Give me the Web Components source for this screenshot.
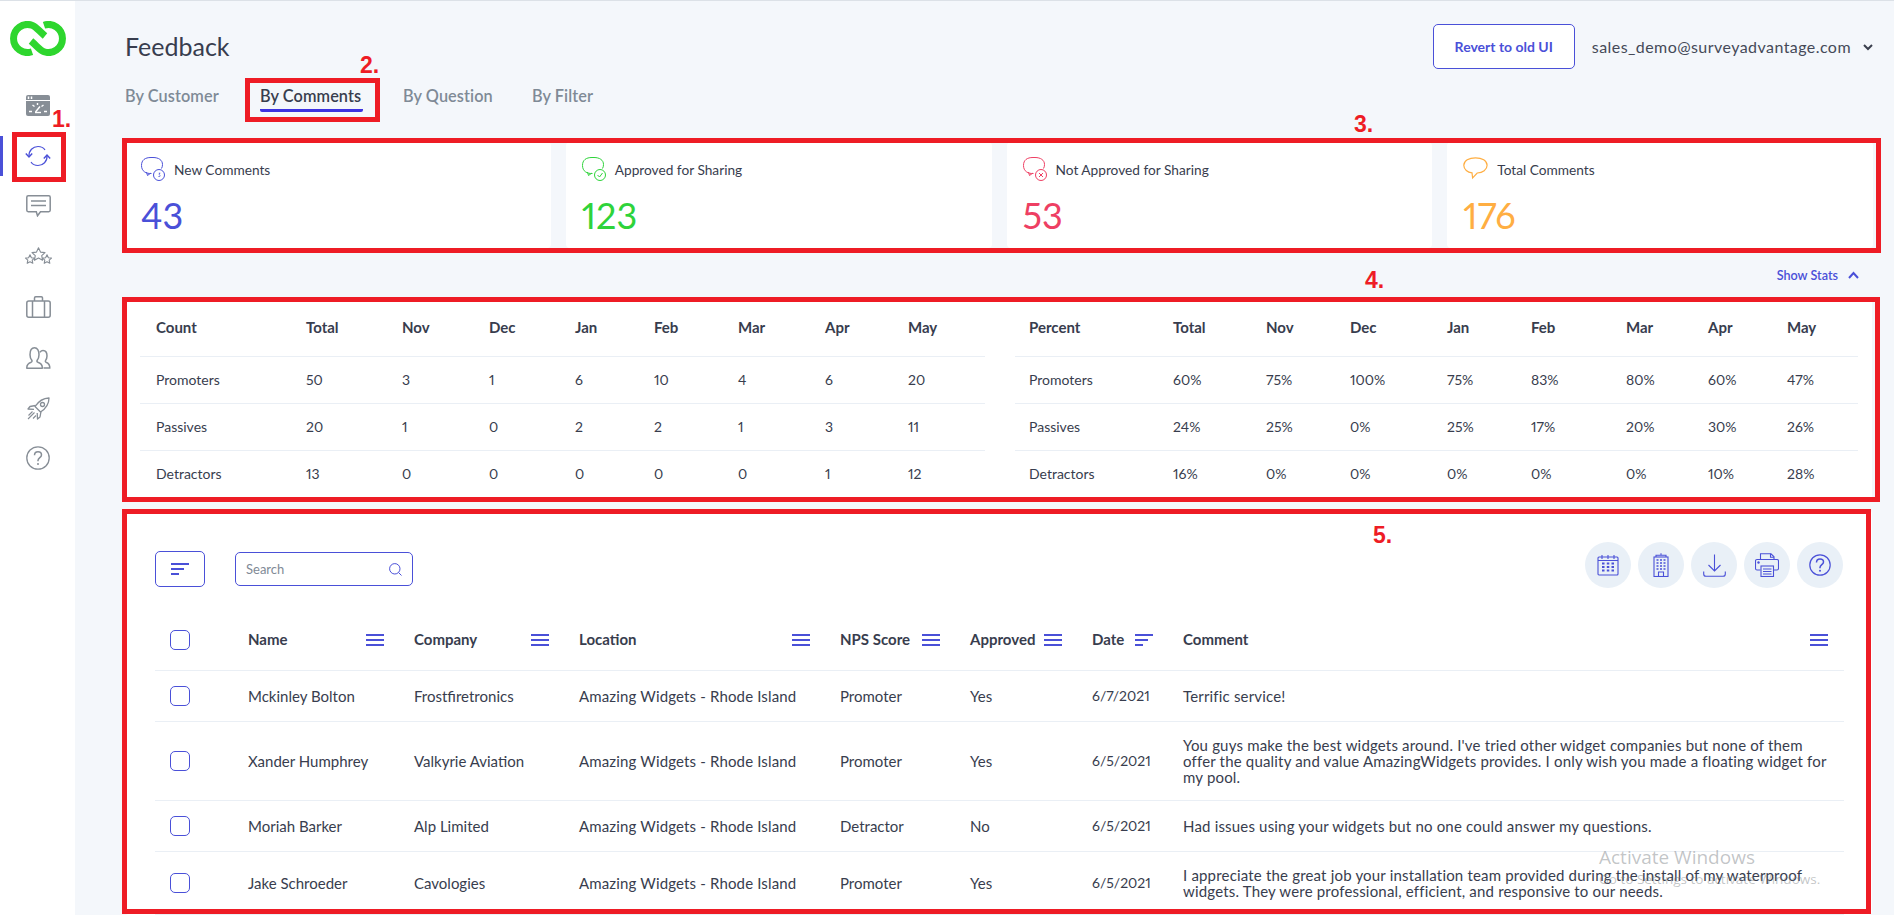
<!DOCTYPE html>
<html>
<head>
<meta charset="utf-8">
<title>Feedback</title>
<style>
    html, body { margin: 0; height: 100%; overflow: hidden; }
    body {
        background: #f4f7fb;
        font-family: Lato, "Noto Sans", sans-serif;
        font-variant-numeric: proportional-nums;
        color: #383d4e;
    }
</style>
</head>
<body>
<app-shell>
    <side-nav slot="nav"></side-nav>
    <page-head></page-head>
    <stat-row>
        <stat-card label="New Comments" value="43" color="#4a50d8" kind="new"></stat-card>
        <stat-card label="Approved for Sharing" value="123" color="#2ed33a" kind="ok"></stat-card>
        <stat-card label="Not Approved for Sharing" value="53" color="#ee3f63" kind="no"></stat-card>
        <stat-card label="Total Comments" value="176" color="#ffae42" kind="total"></stat-card>
    </stat-row>
    <stats-toggle></stats-toggle>
    <stats-panel></stats-panel>
    <feedback-panel></feedback-panel>
</app-shell>

<note-box x="12" y="132" w="54" h="50"></note-box>
<note-box x="245" y="78" w="135" h="44"></note-box>
<note-box x="122" y="138" w="1759" h="115"></note-box>
<note-box x="122" y="297" w="1758" h="205"></note-box>
<note-box x="122" y="509" w="1749" h="405"></note-box>
<note-label x="52" y="108">1.</note-label>
<note-label x="360" y="54">2.</note-label>
<note-label x="1354" y="113">3.</note-label>
<note-label x="1365" y="269">4.</note-label>
<note-label x="1373" y="524">5.</note-label>
<win-mark></win-mark>

<script>
const BLUE = '#4a50d8';

const NAV_ICONS = {
    dash: `<svg width="24" height="21" viewBox="0 0 24 21"><rect width="24" height="21" rx="2" fill="#878e96"/><path d="M0 5.5h24" stroke="#fff" stroke-width="1"/><path d="M2.5 1.5v2.5M5.5 1.5v2.5" stroke="#fff" stroke-width="1.5"/><path d="M3 16.5h3M18 16.5h3M6.5 10l2 1.5M11.5 8v2M17.5 10l-2 1.5M9.5 17l4.5-5.5" stroke="#fff" stroke-width="1.4" fill="none"/><path d="M9 17.5h6" stroke="#fff" stroke-width="1.4"/></svg>`,
    sync: `<svg width="26" height="22" viewBox="0 0 26 22" fill="none" stroke="${BLUE}" stroke-width="1.2"><path d="M4 11.5C3.5 5.5 8 1.5 13 1.5c3 0 5.5 1.2 7 3.5"/><path d="M22 10.5C22.5 16.5 18 20.5 13 20.5c-3 0-5.5-1.2-7-3.5"/><path d="M.8 8.5 4 12l3.2-3.5M18.8 13.5 22 10l3.2 3.5" stroke-width="1.4"/></svg>`,
    chat: `<svg width="25" height="22" viewBox="0 0 25 22" fill="none" stroke="#878e96" stroke-width="1.5"><path d="M2.2.8h20.600a1.400 1.400 0 0 1 1.400 1.400v13.100a1.400 1.400 0 0 1-1.400 1.400h-8.300l-3 4.100-1.200-4.100H2.200A1.400 1.400 0 0 1 .8 15.300V2.200A1.400 1.400 0 0 1 2.200.8z"/><path d="M5 6h15M5 10.500h15"/></svg>`,
    stars: `<svg width="29" height="20" viewBox="0 0 29 20" fill="none" stroke="#878e96" stroke-width="1.1" stroke-linejoin="round"><path d="M14.500.8l2 4.300 4.500.5-3.300 3.100.9 4.600-4.100-2.300-4.100 2.300.9-4.600L8 5.600l4.500-.5z"/><path d="M6 7.800l1.400 2.900 3.100.4-2.300 2.100.6 3.100L6 14.800l-2.800 1.500.6-3.100-2.300-2.100 3.100-.4z"/><path d="M23 7.800l1.400 2.900 3.100.4-2.300 2.100.6 3.100-2.800-1.500-2.800 1.500.6-3.100-2.300-2.100 3.100-.4z"/></svg>`,
    case: `<svg width="25" height="22" viewBox="0 0 25 22" fill="none" stroke="#878e96" stroke-width="1.5"><rect x=".8" y="5" width="23.400" height="16.200" rx="2"/><path d="M8.500 5V2a1.200 1.200 0 0 1 1.200-1.200h5.600A1.200 1.200 0 0 1 16.500 2v3M6.500 5v16M18.500 5v16"/></svg>`,
    people: `<svg width="25" height="22" viewBox="0 0 25 22" fill="none" stroke="#878e96" stroke-width="1.5" stroke-linejoin="round"><path d="M.8 21.200h15.500c.3-3.500-1.500-5-4.500-6-.8-.4-1-1.200-.6-2 1.200-1.500 1.800-3.300 1.800-5.500C13 3.500 11.300.8 8.500.8S4 3.500 4 7.700c0 2.200.6 4 1.800 5.500.4.800.2 1.600-.6 2-3 1-4.600 2.500-4.400 6z"/><path d="M14 5.200c.8-1 1.800-1.600 3-1.600 2.500 0 4 2.300 4 5.500 0 1.800-.5 3.200-1.500 4.500-.3.700-.2 1.300.5 1.600 2.400.9 4 2.200 3.800 5.900h-6.300"/></svg>`,
    rocket: `<svg width="23" height="23" viewBox="0 0 23 23" fill="none" stroke="#878e96" stroke-width="1.3" stroke-linejoin="round"><path d="M22 1c-6 .2-10.500 3.300-14 8.500l5.500 5.500C19 11.500 22 7 22 1z"/><circle cx="15.500" cy="7.500" r="2"/><path d="M8.500 8.500L3 9.500 1 12l6 .3M14 14.500l-1 5.500-2.500 2-.3-6"/><path d="M1.500 18.500l4-4M1 22l6.500-6.500M6 21.500l3-3" stroke-width="1.1"/></svg>`,
    help: `<svg width="24" height="24" viewBox="0 0 24 24" fill="none" stroke="#878e96" stroke-width="1.3"><circle cx="12" cy="12" r="11.200"/><path d="M8.500 9.300C8.500 7 10 5.800 12 5.800s3.500 1.300 3.500 3.200c0 2.600-3.500 2.800-3.500 5.500v.8" stroke-width="1.5"/><circle cx="12" cy="18" r="1" fill="#878e96" stroke="none"/></svg>`
};

const TOOL_ICONS = {
    calendar: `<svg width="22" height="22" viewBox="0 0 22 22" fill="none" stroke="${BLUE}" stroke-width="1.1"><rect x="1" y="3" width="20" height="18" rx="1"/><path d="M1 6.500h20M5 1v4M11 1v4M17 1v4"/><path d="M5 9.500h2.500M9.800 9.500h2.500M14.500 9.500H17M5 13h2.500M9.800 13h2.500M14.500 13H17M5 16.500h2.500M9.800 16.500h2.500M14.500 16.500H17" stroke-width="2"/></svg>`,
    building: `<svg width="16" height="24" viewBox="0 0 16 24" fill="none" stroke="${BLUE}" stroke-width="1.1"><rect x="1" y="4" width="14" height="19.500"/><path d="M3 4V2.200h10V4M8 2.200V.3"/><path d="M3.500 7h2M7 7h2M10.500 7h2M3.500 10h2M7 10h2M10.500 10h2M3.500 13h2M7 13h2M10.500 13h2M3.500 16h2M7 16h2M10.500 16h2" stroke-width="1.7"/><path d="M5.500 23.500V19h5v4.500"/></svg>`,
    download: `<svg width="23" height="23" viewBox="0 0 23 23" fill="none" stroke="${BLUE}" stroke-width="1.1"><path d="M11.500.5v16M5.500 11l6 6 6-6"/><path d="M.7 17.500v2.500a2.300 2.300 0 0 0 2.300 2.300h17a2.300 2.300 0 0 0 2.300-2.300v-2.500"/></svg>`,
    print: `<svg width="24" height="24" viewBox="0 0 24 24" fill="none" stroke="${BLUE}" stroke-width="1.1"><path d="M5.500 6.500V.8h10.500l3 3v2.700"/><path d="M15.500.8v3.500h3.500"/><path d="M5.500 17H2a1.500 1.500 0 0 1-1.500-1.500v-7.500A1.500 1.500 0 0 1 2 6.500h20a1.500 1.500 0 0 1 1.500 1.500v7.500A1.500 1.500 0 0 1 22 17h-3.500"/><rect x="6" y="13" width="12.500" height="10.500"/><path d="M8 16h8.500M8 18.500h8.500M8 21h8.500"/><circle cx="3.500" cy="9.500" r="1.200" fill="${BLUE}" stroke="none"/></svg>`,
    help: `<svg width="22" height="22" viewBox="0 0 22 22" fill="none" stroke="${BLUE}" stroke-width="1.2"><circle cx="11" cy="11" r="10.200"/><path d="M7.500 8.500C7.500 6.300 9 5 11 5s3.500 1.300 3.500 3c0 2.600-3.500 2.800-3.500 5.500v.8" stroke-width="1.5"/><circle cx="11" cy="16.800" r="1" fill="${BLUE}" stroke="none"/></svg>`
};

const BUBBLES = {
    new: `<circle cx="18" cy="18" r="5.500"/><path d="M17.800 16.200h1.500M19 16.200c-1 .3-1 1.300-.5 1.600.7.300.8 1.300.2 1.700h-1.300" stroke-width=".8"/>`,
    ok: `<circle cx="18" cy="18" r="5.500"/><path d="M15.500 18l2 2 3-4"/>`,
    no: `<circle cx="18" cy="18" r="5.500"/><path d="M16 16l4 4M20 16l-4 4"/>`
};

class AppShell extends HTMLElement {
    connectedCallback() {
        this.attachShadow({ mode: 'open' });
        this.shadowRoot.innerHTML = `
            <style>
                :host {
                    display: flex;
                    height: 915px;
                    box-sizing: border-box;
                    border-top: 1px solid #dce1e7;
                    overflow: hidden;
                }
                .content {
                    width: 1748px;
                    margin-left: 50px;
                    display: flex;
                    flex-direction: column;
                }
            </style>
            <slot name="nav"></slot>
            <div class="content"><slot></slot></div>
        `;
    }
}

class SideNav extends HTMLElement {
    connectedCallback() {
        this.attachShadow({ mode: 'open' });
        const items = ['dash', 'sync', 'chat', 'stars', 'case', 'people', 'rocket', 'help'];
        this.shadowRoot.innerHTML = `
            <style>
                :host {
                    display: block;
                    width: 75px;
                    flex: none;
                    background: #fff;
                    box-sizing: border-box;
                    padding-top: 20px;
                }
                .logo { display: block; margin: 0 0 24.5px 10px; }
                .item {
                    height: 50.4px;
                    display: flex;
                    align-items: center;
                    justify-content: center;
                    padding-left: 1px;
                    position: relative;
                }
                .item.on::before {
                    content: '';
                    position: absolute;
                    left: 0;
                    top: 5px;
                    width: 3px;
                    height: 40px;
                    background: ${BLUE};
                }
            </style>
            <svg class="logo" width="56" height="35" viewBox="0 0 56 35" fill="none" stroke="#2ed62e" stroke-width="7">
                <path d="M22 30.770A14 14 0 1 1 22 4.230C26 5.500 29 10 35 15"/>
                <path d="M34 4.230A14 14 0 1 1 34 30.770C30 29.500 27 25 21 20"/>
            </svg>
            ${items.map(k => `<div class="item ${k === 'sync' ? 'on' : ''}">${NAV_ICONS[k]}</div>`).join('')}
        `;
    }
}

class PageHead extends HTMLElement {
    connectedCallback() {
        this.attachShadow({ mode: 'open' });
        const tabs = [['By Customer', 95], ['By Comments', 103], ['By Question', 89], ['By Filter', 70]];
        this.shadowRoot.innerHTML = `
            <style>
                :host {
                    display: block;
                    padding-top: 23px;
                    height: 141px;
                    box-sizing: border-box;
                    color: #383d4e;
                }
                .top { display: flex; align-items: center; height: 45px; }
                h1 { margin: 0 0 2px 0; font-size: 25px; font-weight: 400; line-height: 30px; flex: 1; }
                button {
                    width: 142px;
                    height: 45px;
                    background: #fff;
                    border: 1px solid ${BLUE};
                    border-radius: 5px;
                    color: ${BLUE};
                    font: 700 14px Lato, sans-serif;
                    padding: 0;
                }
                .mail { margin-left: 17px; font-size: 16px; letter-spacing: .44px; color: #454a58; }
                .top svg { margin: 2px 0 0 12px; }
                .tabs { display: flex; margin-top: 15px; }
                .tab {
                    font-size: 16.3px;
                    font-weight: 600;
                    letter-spacing: .08px;
                    line-height: 24px;
                    height: 28px;
                    box-sizing: border-box;
                    color: #7f8a96;
                    margin-right: 40px;
                    white-space: nowrap;
                }
                .tab.on { color: #383d4e; border-bottom: 3px solid #3d33e0; border-radius: 0 0 2px 2px; }
            </style>
            <div class="top">
                <h1>Feedback</h1>
                <button>Revert to old UI</button>
                <span class="mail">sales_demo@surveyadvantage.com</span>
                <svg width="10" height="7" viewBox="0 0 10 7" fill="none" stroke="#3a3f4d" stroke-width="2"><path d="M1 1l4 4 4-4"/></svg>
            </div>
            <div class="tabs">
                ${tabs.map(([t, w], i) => `<div class="tab ${i === 1 ? 'on' : ''}" style="width:${w}px">${t}</div>`).join('')}
            </div>
        `;
    }
}

class StatRow extends HTMLElement {
    connectedCallback() {
        this.attachShadow({ mode: 'open' });
        this.shadowRoot.innerHTML = `
            <style>
                :host {
                    display: grid;
                    grid-template-columns: repeat(4, 1fr);
                    gap: 15px;
                }
            </style>
            <slot></slot>
        `;
    }
}

class StatCard extends HTMLElement {
    connectedCallback() {
        this.attachShadow({ mode: 'open' });
        const color = this.getAttribute('color');
        const kind = this.getAttribute('kind');
        const bubble = kind === 'total'
            ? `<svg width="25" height="23" viewBox="0 0 25 23" fill="none" stroke="${color}" stroke-width="1.2"><path d="M12.500.8C6 .8.8 3.800.8 8.300c0 4.200 3.800 7 8.200 7.500l.6 5.200 4.600-5c5.500-.4 9.900-3.300 9.900-7.700C24.100 3.800 19 .8 12.500.8z"/></svg>`
            : `<svg width="24" height="24" viewBox="0 0 24 24" fill="none" stroke="${color}" stroke-width="1"><path d="M10.500 16.500c-5.500.3-10-2.200-10-8C.5 3 4 .5 10 .5h2c5.500 0 9.500 2.500 9.500 7 0 1.500-.3 3-1 4"/><path d="M5.500 15l1 3.500 3-2.200"/><g>${BUBBLES[kind]}</g></svg>`;
        this.shadowRoot.innerHTML = `
            <style>
                :host {
                    display: block;
                    height: 106px;
                    background: #fff;
                    border-radius: 4px;
                    box-sizing: border-box;
                    padding: 15px 16px 0;
                }
                .top { display: flex; align-items: flex-start; height: 31px; }
                .top span { margin: 4px 0 0 9px; font-size: 13.7px; line-height: 17px; color: #383d4e; }
                .num { font-size: 36px; line-height: 46px; margin-top: 4px; color: ${color}; }
            </style>
            <div class="top">${bubble}<span>${this.getAttribute('label')}</span></div>
            <div class="num">${this.getAttribute('value')}</div>
        `;
    }
}

class StatsToggle extends HTMLElement {
    connectedCallback() {
        this.attachShadow({ mode: 'open' });
        this.shadowRoot.innerHTML = `
            <style>
                :host {
                    display: flex;
                    justify-content: flex-end;
                    align-items: center;
                    height: 50px;
                    padding: 4px 14px 0 0;
                    box-sizing: border-box;
                    font-size: 12.6px;
                    font-weight: 600;
                    color: ${BLUE};
                }
                svg { margin-left: 10px; }
            </style>
            Show Stats
            <svg width="11" height="8" viewBox="0 0 11 8" fill="none" stroke="${BLUE}" stroke-width="2"><path d="M1 7l4.500-5L10 7"/></svg>
        `;
    }
}

class StatsPanel extends HTMLElement {
    table(cols, left, width, pad, head, rows) {
        const row = (cells, cls) => `<div class="row ${cls}" style="grid-template-columns:${cols};padding-left:${pad}px">${cells.map(c => `<span>${c}</span>`).join('')}</div>`;
        return `<div style="margin-left:${left}px;width:${width}px">
            ${row(head, 'head')}
            ${rows.map((r, i) => row(r, i === rows.length - 1 ? 'last' : '')).join('')}
        </div>`;
    }
    connectedCallback() {
        this.attachShadow({ mode: 'open' });
        const months = ['Total', 'Nov', 'Dec', 'Jan', 'Feb', 'Mar', 'Apr', 'May'];
        this.shadowRoot.innerHTML = `
            <style>
                :host {
                    display: flex;
                    height: 204px;
                    background: #fff;
                    border-radius: 4px;
                    margin-right: 1px;
                    font-size: 14px;
                    color: #383d4e;
                }
                .row {
                    display: grid;
                    height: 47px;
                    align-items: center;
                    border-bottom: 1px solid #eaeff5;
                    box-sizing: border-box;
                    white-space: nowrap;
                    padding-bottom: 2px;
                }
                .row.head { height: 59px; font-size: 15px; font-weight: 700; padding-top: 1px; padding-bottom: 2px; }
                .row.last { border-bottom: 0; }
            </style>
            ${this.table('150px 96px 87px 86px 79px 84px 87px 83px 1fr', 15, 845, 16,
                ['Count', ...months],
                [['Promoters', '50', '3', '1', '6', '10', '4', '6', '20'],
                 ['Passives', '20', '1', '0', '2', '2', '1', '3', '11'],
                 ['Detractors', '13', '0', '0', '0', '0', '0', '1', '12']])}
            ${this.table('144px 93px 84px 97px 84px 95px 82px 79px 1fr', 30, 843, 14,
                ['Percent', ...months],
                [['Promoters', '60%', '75%', '100%', '75%', '83%', '80%', '60%', '47%'],
                 ['Passives', '24%', '25%', '0%', '25%', '17%', '20%', '30%', '26%'],
                 ['Detractors', '16%', '0%', '0%', '0%', '0%', '0%', '10%', '28%']])}
        `;
    }
}

const BARS = `<svg width="18" height="12" viewBox="0 0 18 12" fill="${BLUE}"><rect width="18" height="2"/><rect y="5" width="18" height="2"/><rect y="10" width="18" height="2"/></svg>`;
const SORT = `<svg width="18" height="12" viewBox="0 0 18 12" fill="${BLUE}"><rect width="18" height="2"/><rect y="5" width="13" height="2"/><rect y="10" width="8" height="2"/></svg>`;

class FeedbackPanel extends HTMLElement {
    connectedCallback() {
        this.attachShadow({ mode: 'open' });
        const head = ['Name', 'Company', 'Location', 'NPS Score', 'Approved', 'Date', 'Comment'];
        const loc = 'Amazing Widgets - Rhode Island';
        const rows = [
            ['Mckinley Bolton', 'Frostfiretronics', loc, 'Promoter', 'Yes', '6/7/2021', 'Terrific service!'],
            ['Xander Humphrey', 'Valkyrie Aviation', loc, 'Promoter', 'Yes', '6/5/2021', "You guys make the best widgets around. I've tried other widget companies but none of them offer the quality and value AmazingWidgets provides. I only wish you made a floating widget for my pool."],
            ['Moriah Barker', 'Alp Limited', loc, 'Detractor', 'No', '6/5/2021', 'Had issues using your widgets but no one could answer my questions.'],
            ['Jake Schroeder', 'Cavologies', loc, 'Promoter', 'Yes', '6/5/2021', 'I appreciate the great job your installation team provided during the install of my waterproof widgets. They were professional, efficient, and responsive to our needs.']
        ];
        const cls = ['', '', 'loc', '', '', 'date', 'text'];
        this.shadowRoot.innerHTML = `
            <style>
                :host {
                    display: block;
                    margin: 8px 1px 0 0;
                    flex: 1;
                    background: #fff;
                    border-radius: 4px;
                    padding: 32px 28px 0 30px;
                    font-size: 15px;
                    color: #383d4e;
                }
                .bar { display: flex; align-items: flex-start; height: 46px; margin-bottom: 22px; }
                .filter {
                    width: 50px; height: 36px; margin-top: 9px;
                    box-sizing: border-box;
                    border: 1px solid ${BLUE};
                    border-radius: 5px;
                    display: flex; align-items: center; justify-content: center;
                }
                .search {
                    width: 178px; height: 34px; margin: 10px 0 0 30px;
                    box-sizing: border-box;
                    border: 1px solid ${BLUE};
                    border-radius: 5px;
                    display: flex; align-items: center; justify-content: space-between;
                    padding: 0 10px;
                    font-size: 13px;
                    color: #7f8a96;
                }
                .tools { margin: 0 1px 0 auto; display: flex; gap: 7px; }
                .tools div {
                    width: 46px; height: 46px; border-radius: 50%;
                    background: #e9f0f7;
                    display: flex; align-items: center; justify-content: center;
                }
                .row {
                    display: grid;
                    grid-template-columns: 93px 166px 165px 261px 130px 122px 91px 1fr;
                    align-items: center;
                    padding: 15px 0;
                    border-bottom: 1px solid #eaeff5;
                    line-height: 16px;
                }
                .row.head { padding: 20px 0; font-weight: 700; }
                .row.head > div {
                    display: flex;
                    justify-content: space-between;
                    align-items: center;
                    margin-top: -2px;
                    padding-right: 30px;
                    line-height: 20px;
                    white-space: nowrap;
                }
                .row.head > div svg { margin-top: 2px; }
                .row.head > div:last-child { padding-right: 16px; }
                .row > span { white-space: nowrap; }
                .row > .loc { letter-spacing: .15px; }
                .row > .date { font-size: 14px; }
                .row > .text { padding-right: 16px; white-space: normal; letter-spacing: .18px; }
                .check {
                    width: 20px; height: 20px; margin-left: 15px;
                    box-sizing: border-box;
                    border: 1px solid ${BLUE};
                    border-radius: 5px;
                }
            </style>
            <div class="bar">
                <div class="filter">${SORT}</div>
                <div class="search">Search
                    <svg width="13" height="13" viewBox="0 0 13 13" fill="none" stroke="${BLUE}" stroke-width="1"><circle cx="5.800" cy="5.800" r="5.200"/><path d="M9.500 9.500l3 3"/></svg>
                </div>
                <div class="tools">${Object.values(TOOL_ICONS).map(i => `<div>${i}</div>`).join('')}</div>
            </div>
            <div class="row head">
                <span class="check"></span>
                ${head.map(h => `<div>${h}${h === 'Date' ? SORT : BARS}</div>`).join('')}
            </div>
            ${rows.map(r => `<div class="row"><span class="check"></span>${r.map((c, i) => `<span class="${cls[i]}">${c}</span>`).join('')}</div>`).join('')}
        `;
    }
}

class NoteBox extends HTMLElement {
    connectedCallback() {
        this.attachShadow({ mode: 'open' });
        const a = n => this.getAttribute(n) + 'px';
        this.shadowRoot.innerHTML = `
            <style>
                :host {
                    display: block;
                    position: absolute;
                    left: ${a('x')}; top: ${a('y')}; width: ${a('w')}; height: ${a('h')};
                    box-sizing: border-box;
                    border: 5px solid #ee1c25;
                }
            </style>
        `;
    }
}

class NoteLabel extends HTMLElement {
    connectedCallback() {
        this.attachShadow({ mode: 'open' });
        this.shadowRoot.innerHTML = `
            <style>
                :host {
                    display: block;
                    position: absolute;
                    left: ${this.getAttribute('x')}px;
                    top: ${this.getAttribute('y')}px;
                    font: 700 23px/23px "Liberation Sans", sans-serif;
                    color: #ee1c25;
                }
            </style>
            <slot></slot>
        `;
    }
}

class WinMark extends HTMLElement {
    connectedCallback() {
        this.attachShadow({ mode: 'open' });
        this.shadowRoot.innerHTML = `
            <style>
                :host {
                    display: block;
                    position: absolute;
                    left: 1599px;
                    top: 844px;
                    font-family: "Open Sans", sans-serif;
                    color: rgba(120, 125, 130, .45);
                    white-space: nowrap;
                }
                div { font-size: 19px; line-height: 26px; }
                small { display: block; font-size: 13.5px; line-height: 18px; }
            </style>
            <div>Activate Windows</div>
            <small>Go to Settings to activate Windows.</small>
        `;
    }
}

customElements.define('app-shell', AppShell);
customElements.define('side-nav', SideNav);
customElements.define('page-head', PageHead);
customElements.define('stat-row', StatRow);
customElements.define('stat-card', StatCard);
customElements.define('stats-toggle', StatsToggle);
customElements.define('stats-panel', StatsPanel);
customElements.define('feedback-panel', FeedbackPanel);
customElements.define('note-box', NoteBox);
customElements.define('note-label', NoteLabel);
customElements.define('win-mark', WinMark);
</script>
</body>
</html>
